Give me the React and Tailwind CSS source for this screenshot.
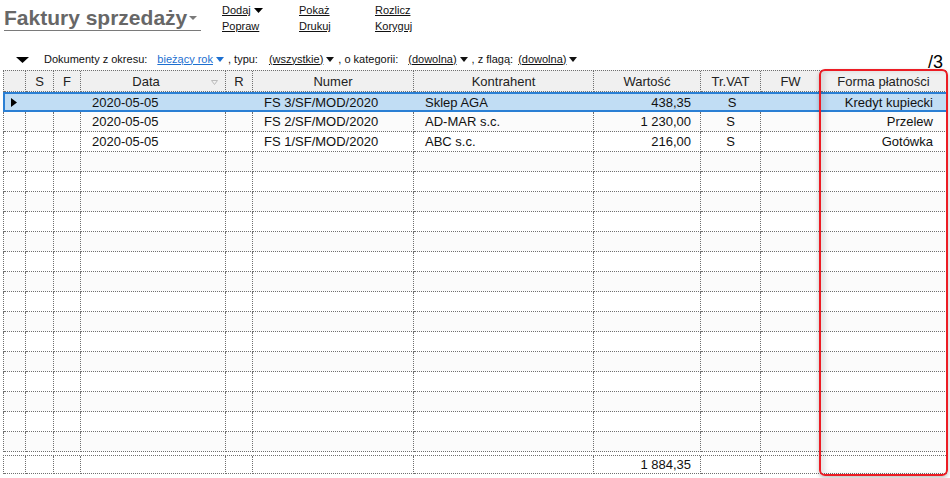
import React from "react";

const cols = "grid grid-cols-[22px_28px_27px_145px_27px_161px_180px_107px_60px_60px_126px]";
const cell = "border-r border-b border-dotted border-[#6f6f6f] flex items-center overflow-hidden whitespace-nowrap";

const rows = [
  { data: "2020-05-05", numer: "FS 3/SF/MOD/2020", kontrahent: "Sklep AGA", wartosc: "438,35", vat: "S", forma: "Kredyt kupiecki" },
  { data: "2020-05-05", numer: "FS 2/SF/MOD/2020", kontrahent: "AD-MAR s.c.", wartosc: "1 230,00", vat: "S", forma: "Przelew" },
  { data: "2020-05-05", numer: "FS 1/SF/MOD/2020", kontrahent: "ABC s.c.", wartosc: "216,00", vat: "S", forma: "Gotówka" },
];

const Tri = ({ w = 8, h = 5, color = "#000", className = "" }) => (
  <svg width={w} height={h} viewBox={`0 0 ${w} ${h}`} className={className}>
    <polygon points={`0,0 ${w},0 ${w / 2},${h}`} fill={color} />
  </svg>
);

const Drop = ({ children, blue }) => (
  <span className={`flex items-center gap-[3px] underline ${blue ? "text-[#1c6fd0] decoration-[#1c6fd0]" : "text-[#111]"}`}>
    {children}
    <Tri w={8} h={5} color={blue ? "#1c6fd0" : "#111"} />
  </span>
);

const App = () => {
  const empty = Array.from({ length: 15 });

  return (
    <div className="relative w-[950px] h-[478px] bg-white overflow-hidden font-['Liberation_Sans',Arial,sans-serif] text-[#111]">
      {/* top bar */}
      <div className="flex items-start h-[50px]">
        <div className="ml-[4px] mt-[5px] w-[197px] h-[26px] border-b border-[#7a7a7a] flex items-end">
          <span className="text-[21px] leading-[24px] font-bold text-[#676767]">Faktury sprzedaży</span>
          <Tri w={8} h={4} color="#7a7a7a" className="mb-[10px] ml-[2px]" />
        </div>
        <div className="ml-[21px] mt-[4px] grid grid-cols-[77px_76px_80px] gap-y-[3px] text-[11px] leading-[13px]">
          <span className="flex items-center gap-[3px] underline">Dodaj <Tri w={9} h={5} /></span>
          <span className="underline">Pokaż</span>
          <span className="underline">Rozlicz</span>
          <span className="underline">Popraw</span>
          <span className="underline">Drukuj</span>
          <span className="underline">Koryguj</span>
        </div>
      </div>

      {/* filter row */}
      <div className="flex items-center h-[18px] text-[11px] leading-[13px]">
        <Tri w={13} h={6} className="ml-[16px] mt-[2px]" />
        <span className="ml-[15px]">Dokumenty z okresu:</span>
        <span className="ml-[10px]"><Drop blue>bieżący rok</Drop></span>
        <span className="ml-[4px]">, typu:</span>
        <span className="ml-[11px]"><Drop>(wszystkie)</Drop></span>
        <span className="ml-[4px]">, o kategorii:</span>
        <span className="ml-[10px]"><Drop>(dowolna)</Drop></span>
        <span className="ml-[4px]">, z flagą:</span>
        <span className="ml-[5px]"><Drop>(dowolna)</Drop></span>
        <span className="ml-auto mr-[7px] mt-[5px] text-[18px] leading-none text-black">/3</span>
      </div>

      {/* grid */}
      <div className="ml-[3px] mt-[2px] w-[943px] text-[13px] leading-[15px]">
        <div className={`${cols} h-[22px] bg-[#f0f0f0] border-t border-l border-dotted border-[#6f6f6f] text-[#222]`}>
          <div className={cell}></div>
          <div className={`${cell} justify-center`}>S</div>
          <div className={`${cell} justify-center`}>F</div>
          <div className={`${cell} relative justify-center pr-[14px]`}>
            Data
            <svg width="7" height="5" viewBox="0 0 7 5" className="absolute right-[7px] top-[9px]">
              <polygon points="0.5,0.5 6.5,0.5 3.5,4.5" fill="none" stroke="#bbb" strokeWidth="1" />
            </svg>
          </div>
          <div className={`${cell} justify-center`}>R</div>
          <div className={`${cell} justify-center`}>Numer</div>
          <div className={`${cell} justify-center`}>Kontrahent</div>
          <div className={`${cell} justify-center`}>Wartość</div>
          <div className={`${cell} justify-center`}>Tr.VAT</div>
          <div className={`${cell} justify-center`}>FW</div>
          <div className={`${cell} justify-center`}>Forma płatności</div>
        </div>

        {rows.map((r, i) =>
          i === 0 ? (
            <div key={i} className={`${cols} h-[20px] box-border bg-[#c1ddf4] border-y-2 border-l-2 border-[#2a7fd4]`}>
              <div className="flex items-center pl-[6px]">
                <svg width="6" height="9" viewBox="0 0 6 9"><polygon points="0,0 6,4.5 0,9" fill="#000" /></svg>
              </div>
              <div></div>
              <div></div>
              <div className="flex items-center pl-[10px]">{r.data}</div>
              <div></div>
              <div className="flex items-center pl-[10px]">{r.numer}</div>
              <div className="flex items-center pl-[10px]">{r.kontrahent}</div>
              <div className="flex items-center justify-end pr-[11px]">{r.wartosc}</div>
              <div className="flex items-center justify-center">{r.vat}</div>
              <div></div>
              <div className="flex items-center justify-end pr-[15px]">{r.forma}</div>
            </div>
          ) : (
            <div key={i} className={`${cols} h-[20px] border-l border-dotted border-[#6f6f6f] ${i % 2 === 1 ? "bg-[#fbfbfb]" : "bg-white"}`}>
              <div className={cell}></div>
              <div className={cell}></div>
              <div className={cell}></div>
              <div className={`${cell} pl-[11px]`}>{r.data}</div>
              <div className={cell}></div>
              <div className={`${cell} pl-[11px]`}>{r.numer}</div>
              <div className={`${cell} pl-[11px]`}>{r.kontrahent}</div>
              <div className={`${cell} justify-end pr-[9px]`}>{r.wartosc}</div>
              <div className={`${cell} justify-center`}>{r.vat}</div>
              <div className={cell}></div>
              <div className={`${cell} justify-end pr-[13px]`}>{r.forma}</div>
            </div>
          )
        )}

        {empty.map((_, i) => (
          <div key={i} className={`${cols} h-[20px] border-l border-dotted border-[#6f6f6f] ${i % 2 === 0 ? "bg-[#fbfbfb]" : "bg-white"}`}>
            {Array.from({ length: 11 }).map((__, j) => (
              <div key={j} className={cell}></div>
            ))}
          </div>
        ))}

        {/* footer */}
        <div className={`${cols} mt-[3px] h-[19px] bg-white border-t border-l border-dotted border-[#6f6f6f]`}>
          {Array.from({ length: 11 }).map((_, j) => (
            <div key={j} className={`${cell} ${j === 7 ? "justify-end pr-[9px]" : ""}`}>
              {j === 7 ? "1 884,35" : null}
            </div>
          ))}
        </div>
      </div>

      {/* red annotation frame */}
      <div className="absolute left-[819px] top-[69px] w-[129px] h-[407px] border-2 border-[#ec1c24] rounded-[6px] shadow-[inset_4px_0_5px_rgba(0,0,0,0.10),0_2px_4px_rgba(0,0,0,0.25)]"></div>
    </div>
  );
};

export default App;
